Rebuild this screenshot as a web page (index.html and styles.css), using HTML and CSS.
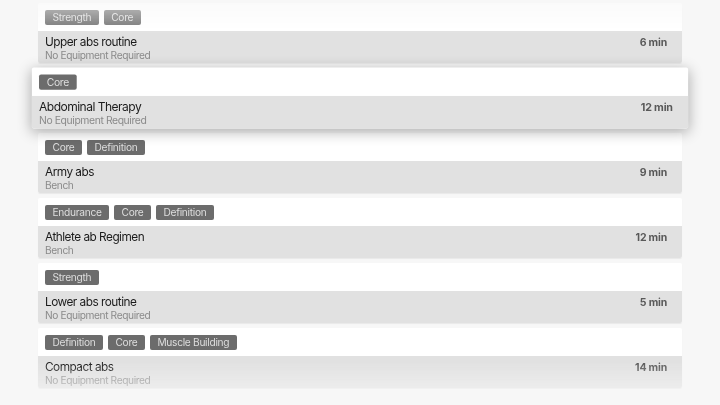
FILE: index.html
```html
<!DOCTYPE html>
<html>
<head>
<meta charset="utf-8">
<link rel="stylesheet" href="styles.css">
</head>
<body>
<div class="list">
  <div class="card">
    <div class="tags"><span class="tag">Strength</span><span class="tag">Core</span></div>
    <div class="info">
      <div class="row"><span class="title">Upper abs routine</span><span class="dur">6 min</span></div>
      <div class="sub">No Equipment Required</div>
    </div>
  </div>
  <div class="card focused">
    <div class="tags"><span class="tag">Core</span></div>
    <div class="info">
      <div class="row"><span class="title">Abdominal Therapy</span><span class="dur">12 min</span></div>
      <div class="sub">No Equipment Required</div>
    </div>
  </div>
  <div class="card">
    <div class="tags"><span class="tag">Core</span><span class="tag">Definition</span></div>
    <div class="info">
      <div class="row"><span class="title">Army abs</span><span class="dur">9 min</span></div>
      <div class="sub">Bench</div>
    </div>
  </div>
  <div class="card">
    <div class="tags"><span class="tag">Endurance</span><span class="tag">Core</span><span class="tag">Definition</span></div>
    <div class="info">
      <div class="row"><span class="title">Athlete ab Regimen</span><span class="dur">12 min</span></div>
      <div class="sub">Bench</div>
    </div>
  </div>
  <div class="card">
    <div class="tags"><span class="tag">Strength</span></div>
    <div class="info">
      <div class="row"><span class="title">Lower abs routine</span><span class="dur">5 min</span></div>
      <div class="sub">No Equipment Required</div>
    </div>
  </div>
  <div class="card">
    <div class="tags"><span class="tag">Definition</span><span class="tag">Core</span><span class="tag">Muscle Building</span></div>
    <div class="info">
      <div class="row"><span class="title">Compact abs</span><span class="dur">14 min</span></div>
      <div class="sub">No Equipment Required</div>
    </div>
  </div>
</div>
</body>
</html>
```
FILE: styles.css
```css
html, body {
  margin: 0;
  padding: 0;
  background: #f7f7f7;
  height: 405px;
  overflow: hidden;
}
body {
  font-family: "Inter", "Liberation Sans", sans-serif;
}
.list {
  box-sizing: border-box;
  width: 720px;
  height: 405px;
  padding: 3px 38px 0;
  display: flex;
  flex-direction: column;
  gap: 5px;
  -webkit-mask-image: linear-gradient(to bottom, rgba(0,0,0,0.35) 0, #000 34px, #000 362px, rgba(0,0,0,0.2) 402px);
  mask-image: linear-gradient(to bottom, rgba(0,0,0,0.35) 0, #000 34px, #000 362px, rgba(0,0,0,0.2) 402px);
}
.card {
  background: #ffffff;
  border-radius: 2px;
  overflow: hidden;
  box-shadow: 0 1px 1px rgba(0,0,0,0.06);
  flex: none;
}
.card.focused {
  transform: scale(1.019);
  box-shadow: 0 3px 14px rgba(0,0,0,0.3);
  position: relative;
  z-index: 2;
}
.tags {
  height: 28px;
  box-sizing: border-box;
  padding: 7px 7px 0;
  display: flex;
  gap: 5px;
  align-items: flex-start;
}
.tag {
  height: 15px;
  line-height: 15px;
  padding: 0 7.5px;
  background: #6c6c6c;
  color: #dedede;
  font-size: 10.2px;
  letter-spacing: -0.3px;
  border-radius: 2px;
}
.info {
  background: #e1e1e1;
  height: 32px;
  box-sizing: border-box;
  padding: 4px 15px 1px 7px;
}
.row {
  display: flex;
  justify-content: space-between;
  align-items: baseline;
  height: 14px;
  line-height: 14px;
}
.title {
  font-size: 11.8px;
  letter-spacing: -0.5px;
  color: #1c1c1c;
}
.dur {
  font-size: 10.5px;
  font-weight: 700;
  letter-spacing: -0.2px;
  color: #595959;
}
.sub {
  font-size: 10.2px;
  letter-spacing: -0.4px;
  line-height: 13px;
  color: #8a8a8a;
}
```
